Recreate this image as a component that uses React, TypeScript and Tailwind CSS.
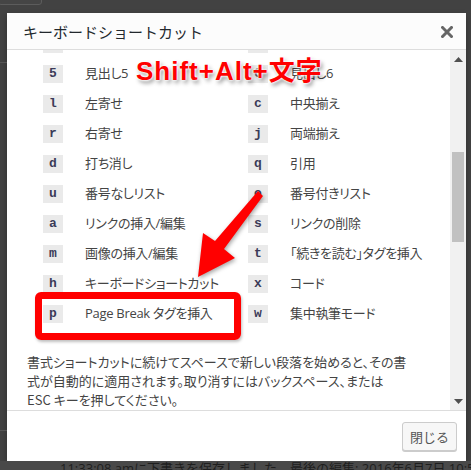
import React from "react";

const rows: [string, string, string, string][] = [
  ["3", "見出し3", "4", "見出し4"],
  ["5", "見出し5", "6", "見出し6"],
  ["l", "左寄せ", "c", "中央揃え"],
  ["r", "右寄せ", "j", "両端揃え"],
  ["d", "打ち消し", "q", "引用"],
  ["u", "番号なしリスト", "o", "番号付きリスト"],
  ["a", "リンクの挿入/編集", "s", "リンクの削除"],
  ["m", "画像の挿入/編集", "t", "「続きを読む」タグを挿入"],
  ["h", "キーボードショートカット", "x", "コード"],
  ["p", "Page Break タグを挿入", "w", "集中執筆モード"],
];

function Cell({ k, label }: { k: string; label: string }) {
  return (
    <div className="flex items-center h-[30px] pl-[36px] min-w-0">
      <div className="shrink-0 w-[20px] h-[18px] bg-[#eaeaea] flex items-center justify-center text-[13px] font-bold text-[#3b3b58] [font-family:'Liberation_Mono','DejaVu_Sans_Mono',monospace]">
        {k}
      </div>
      <div className="shrink-0 ml-[22px] text-[13px] tracking-[-0.3px] text-[#444] whitespace-nowrap [font-feature-settings:'palt'] [font-family:'Open_Sans','Noto_Sans_CJK_JP',sans-serif]">
        {label}
      </div>
    </div>
  );
}

export default function App() {
  return (
    <div className="relative w-[471px] h-[470px] overflow-hidden bg-[#424242] [font-family:'Noto_Sans_CJK_JP',sans-serif]">
      {/* underlying page remnants */}
      <div className="absolute left-[-2px] top-[-20px] w-[44px] h-[25px] rounded-[3px] border border-[#5c5c5c] bg-[#454545]" />
      <div className="absolute left-0 top-[62px] w-[7px] h-px bg-[#555]" />
      <div className="absolute left-0 top-[430px] w-[7px] h-px bg-[#555]" />

      <div className="pt-[13px] pl-[7px]">
        <div className="w-[459px] h-[448px] bg-white flex flex-col shadow-[0_3px_6px_rgba(0,0,0,0.3)]">
          {/* header */}
          <div className="h-[37px] shrink-0 bg-[#fcfcfc] border-b border-[#dddddd] flex items-center justify-between pl-[16px] pr-[13px]">
            <div className="text-[15px] text-[#23282d] leading-none pt-[1px]">キーボードショートカット</div>
            <svg width="12" height="12" viewBox="0 0 12 12" className="mt-[1px]">
              <path d="M1.5 1.5 L10.5 10.5 M10.5 1.5 L1.5 10.5" stroke="#666" strokeWidth="3" strokeLinecap="square" />
            </svg>
          </div>

          {/* body */}
          <div className="h-[360px] shrink-0 flex overflow-hidden">
            <div className="flex-1 overflow-hidden">
              <div className="mt-[-21px] grid grid-cols-[205px_1fr]">
                {rows.map((r) => (
                  <React.Fragment key={r[0]}>
                    <Cell k={r[0]} label={r[1]} />
                    <Cell k={r[2]} label={r[3]} />
                  </React.Fragment>
                ))}
              </div>
              <div className="mt-[23px] pl-[20px] text-[13px] leading-[19px] text-[#444] [font-feature-settings:'palt']">
                <div className="whitespace-nowrap">書式ショートカットに続けてスペースで新しい段落を始めると、その書</div>
                <div className="whitespace-nowrap">式が自動的に適用されます。取り消すにはバックスペース、または</div>
                <div className="whitespace-nowrap">ESC キーを押してください。</div>
              </div>
            </div>
            {/* scrollbar */}
            <div className="w-[16px] shrink-0 bg-[#f1f1f1] flex flex-col items-center">
              <svg width="9" height="5" viewBox="0 0 9 5" className="mt-[7px]">
                <path d="M0 5 L4.5 0 L9 5 Z" fill="#505050" />
              </svg>
              <div className="mt-[90px] w-[12px] h-[90px] bg-[#c1c1c1]" />
              <div className="flex-1" />
              <svg width="9" height="5" viewBox="0 0 9 5" className="mb-[6px]">
                <path d="M0 0 L9 0 L4.5 5 Z" fill="#505050" />
              </svg>
            </div>
          </div>

          {/* footer */}
          <div className="flex-1 border-t border-[#dddddd] flex justify-end items-start pt-[11px] pr-[9px]">
            <div className="w-[55px] h-[29px] rounded-[3px] border border-[#cccccc] bg-[#f7f7f7] shadow-[0_1px_0_#cccccc] flex items-center justify-center text-[13px] text-[#555]">
              閉じる
            </div>
          </div>
        </div>
      </div>

      <div className="pl-[60px] bg-[#494949] h-[20px] text-[13px] leading-[14px] text-[#1e1e1e] whitespace-nowrap [font-family:'Open_Sans','Noto_Sans_CJK_JP',sans-serif]">
        11:33:08 amに下書きを保存しました。最後の編集: 2016年6月7日 10:59 AM -
      </div>

      {/* annotations */}
      <div className="absolute left-[136px] top-[56px] text-[26px] leading-[30px] tracking-[1px] font-bold text-[#ff0000] whitespace-nowrap [font-family:'Liberation_Sans','Noto_Sans_CJK_JP',sans-serif] [text-shadow:0_0_2px_#fff,0_0_2px_#fff,0_0_3px_#fff,2px_3px_4px_rgba(0,0,0,0.45)]">
        Shift+Alt+文字
      </div>

      <svg className="absolute left-0 top-0 [filter:drop-shadow(1px_2px_2px_rgba(0,0,0,0.35))]" width="471" height="470" viewBox="0 0 471 470">
        <polygon points="258,191 263,196 224,249 235,258 198,277 203,233 215,241" fill="#ff0000" />
      </svg>

      <div className="absolute left-[35px] top-[292px] w-[206px] h-[48px] border-[7px] border-[#ff0000] rounded-[6px] shadow-[1px_2px_3px_rgba(0,0,0,0.25)]" />
    </div>
  );
}
